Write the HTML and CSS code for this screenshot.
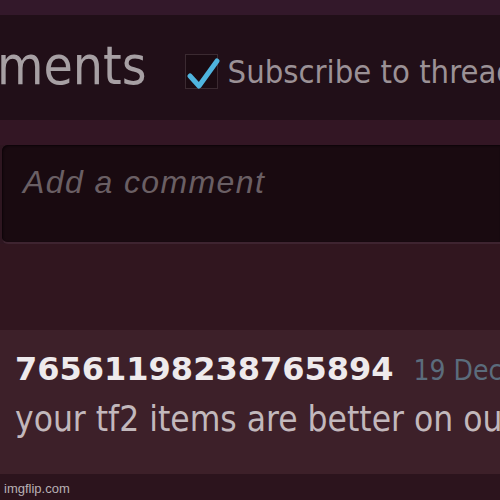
FILE: index.html
```html
<!DOCTYPE html>
<html>
<head>
<meta charset="utf-8">
<link rel="stylesheet" href="styles.css">
</head>
<body>
<div class="page">
  <div class="topband"></div>
  <div class="header">
    <span class="title">ments</span>
    <label class="subscribe">
      <span class="checkbox">
        <svg viewBox="0 0 34 36" width="34" height="36"><path d="M4 21 L13 31 L31 6" fill="none" stroke="#4fb4de" stroke-width="5" stroke-linecap="round" stroke-linejoin="round"/></svg>
      </span>
      <span class="sublabel">Subscribe to thread</span>
    </label>
  </div>
  <div class="gap1"></div>
  <div class="inputbox"><span class="placeholder">Add a comment</span></div>
  <div class="gap2"></div>
  <div class="comment">
    <div class="meta"><span class="author">76561198238765894</span><span class="date">19 Dec</span></div>
    <div class="text">your tf2 items are better on our site</div>
  </div>
  <div class="footer"><span class="wm">imgflip.com</span></div>
</div>
</body>
</html>
```
FILE: styles.css
```css
html, body { margin: 0; padding: 0; }
body { background: #2e1620; width: 500px; height: 500px; overflow: hidden; }
.page { width: 500px; display: flex; flex-direction: column; }
.topband { height: 15px; background: #33182a; }
.header { height: 105px; background: #210f18; display: flex; align-items: center; white-space: nowrap; overflow: hidden; }
.title { font-family: "DejaVu Sans Condensed", "DejaVu Sans", sans-serif; font-stretch: condensed; font-size: 53px; line-height: 60px; color: #a7a0a4; margin-left: -3px; padding-bottom: 3px; }
.subscribe { display: flex; align-items: center; margin-left: 38px; padding-top: 8px; }
.checkbox { width: 33px; height: 35px; border: 1px solid #3b2a31; background: #1b0b12; position: relative; box-sizing: border-box; }
.checkbox svg { position: absolute; left: 0; top: 0; }
.sublabel { font-family: "DejaVu Sans Condensed", "DejaVu Sans", sans-serif; font-stretch: condensed; font-size: 32.5px; color: #9b9196; margin-left: 10px; }
.gap1 { height: 25px; background: #331624; }
.inputbox { height: 97px; background: #190a10; margin-left: 2px; border-radius: 6px 0 0 6px; border-bottom: 2px solid #3e2430; box-shadow: inset 1px 1px 2px #0c0408; }
.placeholder { display: block; font-family: "Liberation Sans", Arial, sans-serif; font-style: italic; font-size: 32px; letter-spacing: 1.4px; color: #6a5f64; margin: 19px 0 0 21px; }
.gap2 { height: 86px; background: #31161f; }
.comment { height: 144px; background: #3d2029; padding: 0 0 0 15px; box-sizing: border-box; white-space: nowrap; overflow: hidden; }
.meta { margin-top: 20px; display: flex; align-items: baseline; }
.author { font-family: "DejaVu Sans", sans-serif; font-weight: bold; font-size: 32px; color: #eeeaec; }
.date { font-family: "DejaVu Sans Condensed", "DejaVu Sans", sans-serif; font-stretch: condensed; font-size: 28px; color: #5b6c7c; margin-left: 20px; }
.text { font-family: "DejaVu Sans Condensed", "DejaVu Sans", sans-serif; font-stretch: condensed; font-size: 35px; line-height: 40px; color: #c2b8bc; margin-top: 11px; }
.footer { height: 26px; background: #2c141d; }
.wm { display: block; font-family: "Liberation Sans", Arial, sans-serif; font-size: 13px; color: #b8b0b4; margin: 7px 0 0 4px; }
```
